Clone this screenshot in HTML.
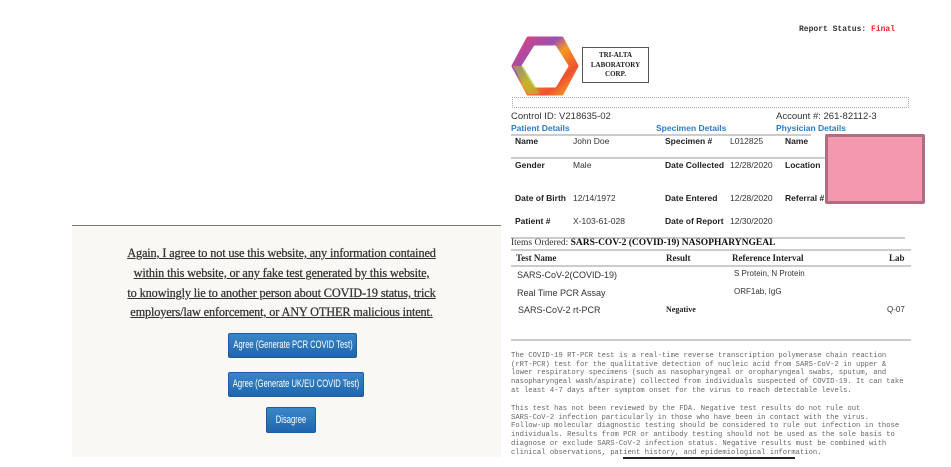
<!DOCTYPE html>
<html><head><meta charset="utf-8"><style>
*{margin:0;padding:0;box-sizing:border-box}
body{width:951px;height:467px;background:#fff;position:relative;overflow:hidden;font-family:"Liberation Sans",sans-serif}
.a{position:absolute;white-space:nowrap}
#left{position:absolute;left:72px;top:225px;width:429px;height:232px;background:#f9f8f4;border-top:1px solid #777}
.t{position:absolute;left:0;width:419px;text-align:center;font-family:"Liberation Serif",serif;font-size:12.3px;color:#333;text-decoration:underline;line-height:20px;white-space:nowrap;letter-spacing:-0.15px;-webkit-text-stroke:0.25px #333}
.btn{position:absolute;background:linear-gradient(#3a86c8,#1f66ad);color:#fff;font-size:11px;border-radius:2px;border:1px solid #1a5c9c;white-space:nowrap;overflow:hidden}
.btn span{position:absolute;left:50%;top:0;transform:translateX(-50%) scaleX(.69)}
.lb{font-size:8.5px;font-weight:bold;color:#222}
.v{font-size:8.5px;color:#333}
.bl{font-size:8.5px;font-weight:bold;color:#2b7cc8}
.m{font-family:"Liberation Mono",monospace;font-size:7.2px;color:#666;line-height:8.7px;white-space:pre}
.hr{position:absolute;height:2px;background:#ccc}
</style></head><body>
<div id="left">
<div class="t" style="top:17px">Again, I agree to not use this website, any information contained</div>
<div class="t" style="top:37px">within this website, or any fake test generated by this website,</div>
<div class="t" style="top:57px">to knowingly lie to another person about COVID-19 status, trick</div>
<div class="t" style="top:76px">employers/law enforcement, or ANY OTHER malicious intent.</div>
</div>
<div class="btn" style="left:228px;top:333px;width:129px;height:25px;line-height:23px"><span>Agree (Generate PCR COVID Test)</span></div>
<div class="btn" style="left:228px;top:372px;width:136px;height:25px;line-height:23px"><span>Agree (Generate UK/EU COVID Test)</span></div>
<div class="btn" style="left:266px;top:407px;width:50px;height:26px;line-height:24px"><span>Disagree</span></div>

<div class="a" style="left:799px;top:25px;font-family:'Liberation Mono',monospace;font-size:8px;font-weight:bold;color:#333">Report Status: <span style="color:#f02020">Final</span></div>
<svg class="a" style="left:510px;top:35px" width="70" height="63" viewBox="0 0 70 63">
<defs><linearGradient id="g" x1="0" y1="0" x2="1" y2="1"><stop offset="0" stop-color="#e0407a"/><stop offset=".35" stop-color="#9b4fb0"/><stop offset=".5" stop-color="#f59a20"/><stop offset=".75" stop-color="#ef5030"/><stop offset="1" stop-color="#f5b820"/></linearGradient></defs>
<polygon points="18,3 52,3 67,31 52,59 18,59 3,31" fill="url(#g)" stroke="url(#g)" stroke-width="3" stroke-linejoin="round"/>
<polygon points="25,12 45,12 57,31 45,51 25,51 13,31" fill="#fff" stroke="#fff" stroke-width="3" stroke-linejoin="round"/>
<polygon points="3,31 18,59 30,59 13,31" fill="#a8c830" opacity=".6"/>
</svg>
<div class="a" style="left:582px;top:47px;width:67px;height:36px;border:1.5px solid #555;text-align:center;font-family:'Liberation Serif',serif;font-weight:bold;font-size:7px;line-height:9.5px;padding-top:3px;color:#222">TRI-ALTA<br>LABORATORY<br>CORP.</div>
<div class="a" style="left:512px;top:97px;width:397px;height:11px;border:1px dotted #aaa"></div>
<div class="a" style="left:511px;top:111px;font-size:9.5px;color:#333">Control ID: V218635-02</div>
<div class="a" style="left:776px;top:111px;font-size:9.5px;color:#333">Account #: 261-82112-3</div>
<div class="a bl" style="left:511px;top:123px">Patient Details</div>
<div class="a bl" style="left:656px;top:123px">Specimen Details</div>
<div class="a bl" style="left:776px;top:123px">Physician Details</div>
<div class="hr" style="left:511px;top:134px;width:300px"></div>
<div class="a lb" style="left:515px;top:136px">Name</div><div class="a v" style="left:573px;top:136px">John Doe</div>
<div class="a lb" style="left:665px;top:136px">Specimen #</div><div class="a v" style="left:730px;top:136px">L012825</div>
<div class="a lb" style="left:785px;top:136px">Name</div>
<div class="hr" style="left:511px;top:157px;width:320px"></div>
<div class="a lb" style="left:515px;top:160px">Gender</div><div class="a v" style="left:573px;top:160px">Male</div>
<div class="a lb" style="left:665px;top:160px">Date Collected</div><div class="a v" style="left:730px;top:160px">12/28/2020</div>
<div class="a lb" style="left:785px;top:160px">Location</div>
<div class="a lb" style="left:515px;top:193px">Date of Birth</div><div class="a v" style="left:573px;top:193px">12/14/1972</div>
<div class="a lb" style="left:665px;top:193px">Date Entered</div><div class="a v" style="left:730px;top:193px">12/28/2020</div>
<div class="a lb" style="left:785px;top:193px">Referral #</div>
<div class="a lb" style="left:515px;top:216px">Patient #</div><div class="a v" style="left:573px;top:216px">X-103-61-028</div>
<div class="a lb" style="left:665px;top:216px">Date of Report</div><div class="a v" style="left:730px;top:216px">12/30/2020</div>
<div class="a" style="left:825px;top:134px;width:100px;height:70px;background:#f398ae;border:3px solid #b06c80;border-radius:2px"></div>
<div class="hr" style="left:511px;top:237px;width:394px"></div>
<div class="a" style="left:511px;top:238px;font-family:'Liberation Serif',serif;font-size:9.5px;color:#333">Items Ordered: <b style="color:#111">SARS-COV-2 (COVID-19) NASOPHARYNGEAL</b></div>
<div class="hr" style="left:511px;top:249px;width:400px"></div>
<div class="a" style="left:516px;top:253px;font-family:'Liberation Serif',serif;font-weight:bold;font-size:9px;color:#222">Test Name</div>
<div class="a" style="left:666px;top:253px;font-family:'Liberation Serif',serif;font-weight:bold;font-size:9px;color:#222">Result</div>
<div class="a" style="left:732px;top:253px;font-family:'Liberation Serif',serif;font-weight:bold;font-size:9px;color:#222">Reference Interval</div>
<div class="a" style="left:889px;top:253px;font-family:'Liberation Serif',serif;font-weight:bold;font-size:9px;color:#222">Lab</div>
<div class="hr" style="left:511px;top:265px;width:400px"></div>
<div class="a v" style="left:517px;top:270px;font-size:9px">SARS-CoV-2(COVID-19)</div>
<div class="a v" style="left:734px;top:269px;font-size:8px">S Protein, N Protein</div>
<div class="a v" style="left:517px;top:288px;font-size:9px">Real Time PCR Assay</div>
<div class="a v" style="left:734px;top:287px;font-size:8px">ORF1ab, IgG</div>
<div class="a v" style="left:518px;top:305px;font-size:9px">SARS-CoV-2 rt-PCR</div>
<div class="a" style="left:666px;top:305px;font-family:'Liberation Serif',serif;font-weight:bold;font-size:8px;color:#222">Negative</div>
<div class="a v" style="left:887px;top:305px;font-size:8px">Q-07</div>
<div class="hr" style="left:511px;top:339px;width:400px"></div>
<div class="a m" style="left:511px;top:352px">The COVID-19 RT-PCR test is a real-time reverse transcription polymerase chain reaction
(rRT-PCR) test for the qualitative detection of nucleic acid from SARS-CoV-2 in upper &amp;
lower respiratory specimens (such as nasopharyngeal or oropharyngeal swabs, sputum, and
nasopharyngeal wash/aspirate) collected from individuals suspected of COVID-19. It can take
at least 4-7 days after symptom onset for the virus to reach detectable levels.</div>
<div class="a m" style="left:511px;top:405px">This test has not been reviewed by the FDA. Negative test results do not rule out
SARS-CoV-2 infection particularly in those who have been in contact with the virus.
Follow-up molecular diagnostic testing should be considered to rule out infection in those
individuals. Results from PCR or antibody testing should not be used as the sole basis to
diagnose or exclude SARS-CoV-2 infection status. Negative results must be combined with
clinical observations, patient history, and epidemiological information.</div>
<div class="a" style="left:623px;top:457px;width:172px;height:2px;background:#222"></div>
</body></html>
